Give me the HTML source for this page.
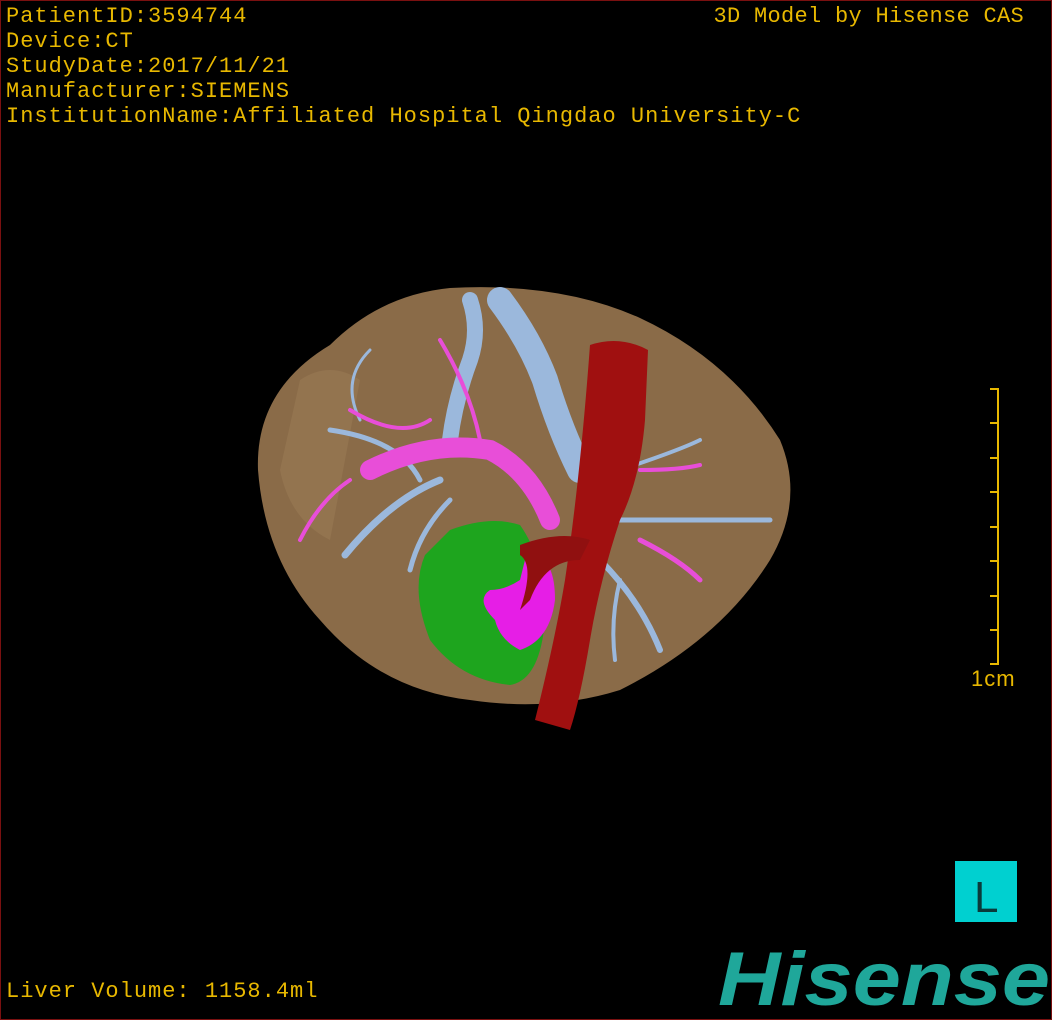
<!DOCTYPE html>
<html><head><style>
body{margin:0;width:1052px;height:1020px;background:#000;overflow:hidden;position:relative;font-family:"Liberation Mono","DejaVu Sans Mono",monospace}
.frame{position:absolute;left:0;top:0;width:1050px;height:1018px;border:1px solid #7a1010}
.t{position:absolute;color:#e8b800;font-size:22px;line-height:25px;white-space:pre;font-family:"Liberation Mono",monospace;letter-spacing:1px}
</style></head><body>
<div class="frame"></div>
<div class="t" style="left:6px;top:4px">PatientID:3594744<br>Device:CT<br>StudyDate:2017/11/21<br>Manufacturer:SIEMENS<br>InstitutionName:Affiliated Hospital Qingdao University-C</div>
<div class="t" style="right:28px;top:4px;letter-spacing:0.3px">3D Model by Hisense CAS</div>
<div class="t" style="left:6px;top:979px">Liver Volume: 1158.4ml</div>
<div class="t" style="left:971px;top:666px;font-family:'Liberation Sans',sans-serif">1cm</div>
<svg width="1052" height="1020" style="position:absolute;left:0;top:0">
<g stroke="#e8b800" stroke-width="2" fill="none">
<line x1="998" y1="388" x2="998" y2="665"/>
<line x1="990" y1="389" x2="998" y2="389"/><line x1="990" y1="423" x2="998" y2="423"/><line x1="990" y1="458" x2="998" y2="458"/><line x1="990" y1="492" x2="998" y2="492"/><line x1="990" y1="527" x2="998" y2="527"/><line x1="990" y1="561" x2="998" y2="561"/><line x1="990" y1="596" x2="998" y2="596"/><line x1="990" y1="630" x2="998" y2="630"/><line x1="990" y1="664" x2="998" y2="664"/>
</g>
<path d="M330 345 Q380 295 450 288 Q560 282 640 318 Q730 360 780 440 Q805 500 770 560 Q720 640 620 690 Q550 712 470 700 Q380 690 320 620 Q265 560 258 470 Q255 390 330 345Z" fill="#8a6b48"/>
<path d="M300 380 Q330 360 360 380 L330 540 Q290 520 280 470Z" fill="#9a7a55" opacity=".6"/>
<g stroke="#9bb8dc" fill="none" stroke-linecap="round">
<path d="M470 300 Q480 330 470 360 Q455 400 450 440" stroke-width="16"/>
<path d="M500 300 Q530 340 545 380 Q560 430 580 470" stroke-width="26"/>
<path d="M440 480 Q390 500 345 555" stroke-width="7"/>
<path d="M420 480 Q400 440 330 430" stroke-width="5"/>
<path d="M600 560 Q640 600 660 650" stroke-width="6"/>
<path d="M610 520 Q680 520 770 520" stroke-width="5"/>
<path d="M620 470 Q680 450 700 440" stroke-width="4"/>
<path d="M450 500 Q420 530 410 570" stroke-width="5"/>
<path d="M620 580 Q610 620 615 660" stroke-width="4"/>
<path d="M360 420 Q340 380 370 350" stroke-width="3"/>
</g>
<g stroke="#e84ed8" fill="none" stroke-linecap="round">
<path d="M370 470 Q430 440 490 450 Q530 470 550 520" stroke-width="20"/>
<path d="M430 420 Q400 440 350 410" stroke-width="4"/>
<path d="M350 480 Q320 500 300 540" stroke-width="4"/>
<path d="M640 540 Q680 560 700 580" stroke-width="5"/>
<path d="M640 470 Q680 470 700 465" stroke-width="4"/>
<path d="M480 440 Q470 390 440 340" stroke-width="4"/>
</g>
<path d="M450 530 Q490 515 520 525 Q545 560 545 620 Q540 680 510 685 Q460 680 430 640 Q410 590 425 555Z" fill="#1ea51e"/>
<path d="M525 560 Q555 550 555 600 Q550 640 520 650 Q500 640 495 620 Q475 600 490 590 Q505 590 520 580Z" fill="#e61ee6"/>
<path d="M590 345 Q620 335 648 350 L645 420 Q640 480 620 520 Q600 580 590 640 Q580 700 570 730 L535 720 Q555 640 565 580 Q580 480 590 345Z" fill="#a01010"/>
<path d="M520 545 Q560 530 590 540 L580 560 Q545 560 530 600 L520 610 Q535 565 520 555Z" fill="#901010"/>
<rect x="955" y="861" width="62" height="61" fill="#00d0d0"/>
<text x="974" y="912" font-family="Liberation Sans,sans-serif" font-size="44" fill="#0a3a3a">L</text>
<text x="718" y="1005" font-family="Liberation Sans,sans-serif" font-weight="bold" font-style="italic" font-size="76" fill="#1fa79a" textLength="332" lengthAdjust="spacingAndGlyphs">Hisense</text>
</svg>
</body></html>
